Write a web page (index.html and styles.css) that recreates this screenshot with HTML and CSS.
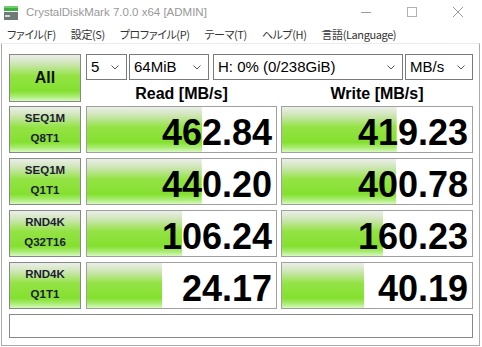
FILE: index.html
```html
<!DOCTYPE html>
<html>
<head>
    <meta charset="utf-8" />
    <title>CrystalDiskMark 7.0.0 x64 [ADMIN]</title>
    <link rel="stylesheet" href="styles.css">
</head>
<body>
    <!-- タイトルバー -->
    <div class="titlebar">
        <svg class="app-icon" width="16" height="16" viewBox="0 0 16 16">
            <rect x="0" y="0" width="14" height="5" fill="#3fae3f"/>
            <rect x="0" y="0" width="14" height="2" fill="#6cd06c"/>
            <rect x="0" y="6" width="14" height="8" fill="#6f7977"/>
            <rect x="1" y="9" width="5" height="2" fill="#d2dad8"/>
        </svg>
        <span class="title">CrystalDiskMark 7.0.0 x64 [ADMIN]</span>
        <div class="controls">
            <svg width="12" height="12" viewBox="0 0 12 12"><line x1="1" y1="6.5" x2="11" y2="6.5" stroke="#9a9a9a"/></svg>
            <svg width="12" height="12" viewBox="0 0 12 12"><rect x="1.5" y="1.5" width="9" height="9" fill="none" stroke="#b0b0b0"/></svg>
            <svg width="12" height="12" viewBox="0 0 12 12"><path d="M1 1 L11 11 M11 1 L1 11" stroke="#9a9a9a" fill="none"/></svg>
        </div>
    </div>

    <!-- メニュー -->
    <div class="menubar">
        <span>ファイル(F)</span>
        <span>設定(S)</span>
        <span>プロファイル(P)</span>
        <span>テーマ(T)</span>
        <span>ヘルプ(H)</span>
        <span>言語(Language)</span>
    </div>

    <div class="client">
        <div class="top">
            <button class="btn all">All</button>
            <div class="combos">
                <div class="combo w-count">5</div>
                <div class="combo w-size">64MiB</div>
                <div class="combo w-drive">H: 0% (0/238GiB)</div>
                <div class="combo w-unit">MB/s</div>
            </div>
            <div class="head">Read [MB/s]</div>
            <div class="head">Write [MB/s]</div>
        </div>

        <div class="results">
            <button class="btn label">SEQ1M<br>Q8T1</button>
            <div class="result" style="background-size: 61.09% 100%">462.84</div>
            <div class="result" style="background-size: 60.37% 100%">419.23</div>

            <button class="btn label">SEQ1M<br>Q1T1</button>
            <div class="result" style="background-size: 60.73% 100%">440.20</div>
            <div class="result" style="background-size: 60.05% 100%">400.78</div>

            <button class="btn label">RND4K<br>Q32T16</button>
            <div class="result" style="background-size: 50.44% 100%">106.24</div>
            <div class="result" style="background-size: 53.41% 100%">160.23</div>

            <button class="btn label">RND4K<br>Q1T1</button>
            <div class="result" style="background-size: 39.72% 100%">24.17</div>
            <div class="result" style="background-size: 43.40% 100%">40.19</div>
        </div>

        <div class="status"></div>
    </div>
</body>
</html>
```

FILE: styles.css
```css
/* 全体 */
body {
    margin: 0;
    width: 482px;
    height: 347px;
    background-color: #ffffff;
    font-family: "Liberation Sans", Arial, "Noto Sans CJK JP", sans-serif;
    color: #000;
    overflow: hidden;
}

/* タイトルバー */
.titlebar {
    height: 24px;
    display: flex;
    align-items: center;
}

.app-icon {
    margin-left: 4px;
    margin-right: 6px;
    margin-top: 3px;
}

.title {
    font-size: 11.5px;
    color: #999;
}

.controls {
    margin-left: auto;
    display: flex;
    gap: 34px;
    margin-right: 18px;
}

/* メニュー */
.menubar {
    height: 19px;
    display: flex;
    align-items: center;
    gap: 15px;
    padding-left: 7px;
    font-family: "Noto Sans CJK JP", sans-serif;
    font-feature-settings: "palt";
    font-size: 11px;
    letter-spacing: -0.4px;
    color: #333;
}

/* クライアント領域 */
.client {
    height: 303px;
    box-sizing: border-box;
    margin: 0 2px 0 1px;
    border: 1px solid #ababab;
    border-top-color: #ececec;
    padding: 10px 0 0 7px;
}

/* ボタン共通 */
.btn {
    margin: 0;
    padding: 0;
    border: 1px solid #888;
    font-family: "Liberation Sans", Arial, sans-serif;
    font-weight: bold;
    color: #1c1c34;
    background: linear-gradient(to bottom, #eceee9 0%, #cfe6b8 18%, #94e345 45%, #84e02f 78%, #a8ec72 90%, #d8f8c0 100%);
    box-sizing: border-box;
    cursor: pointer;
}

/* 上段 */
.top {
    display: grid;
    grid-template-columns: 73px 191px 192px;
    grid-template-rows: 26px 22px;
    column-gap: 4px;
}

.all {
    grid-row: 1 / 3;
    width: 72px;
    height: 48px;
    font-size: 16px;
    color: #111;
}

.combos {
    grid-column: 2 / 4;
    display: flex;
}

.combo {
    height: 26px;
    box-sizing: border-box;
    border: 1px solid #7a7a7a;
    font-size: 15px;
    line-height: 24px;
    padding-left: 4px;
    background: #fff url("data:image/svg+xml,%3Csvg xmlns='http://www.w3.org/2000/svg' width='8' height='5'%3E%3Cpath d='M0.5 0.5 L4 4 L7.5 0.5' fill='none' stroke='%23555'/%3E%3C/svg%3E") no-repeat right 7px center;
}

.w-count { width: 41px; }
.w-size { width: 80px; margin-left: 2px; }
.w-drive { width: 190px; margin-left: 4px; }
.w-unit { width: 68px; margin-left: 2px; }

.head {
    grid-row: 2;
    text-align: center;
    font-size: 16px;
    font-weight: bold;
    line-height: 16px;
    padding-top: 6px;
}

/* 結果 */
.results {
    margin-top: 4px;
    display: grid;
    grid-template-columns: 73px 191px 192px;
    grid-auto-rows: 47px;
    column-gap: 4px;
    row-gap: 5px;
}

.label {
    width: 72px;
    height: 47px;
    font-size: 11.5px;
    line-height: 20px;
    padding-bottom: 3px;
}

.result {
    height: 47px;
    box-sizing: border-box;
    border: 1px solid #a0a0a0;
    background: #fff linear-gradient(to bottom, #eceee9 0%, #cfe6b8 18%, #94e345 45%, #84e02f 78%, #a8ec72 90%, #d8f8c0 100%) no-repeat left top;
    text-align: right;
    font-size: 36px;
    font-weight: bold;
    line-height: 41px;
    padding: 5px 4px 0 0;
}

/* ステータス */
.status {
    margin-top: 5px;
    width: 464px;
    height: 24px;
    box-sizing: border-box;
    border: 1px solid #888;
    background: #fff;
}
```
